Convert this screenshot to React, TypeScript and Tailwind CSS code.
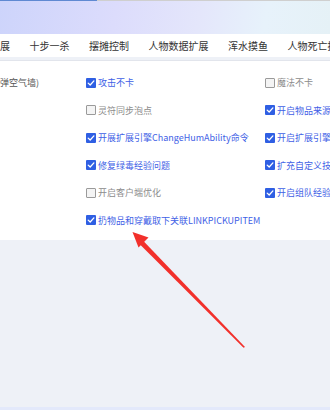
import React from "react";

interface Option {
  label: string;
  checked: boolean;
}

const tabs = ["十步一杀", "摆摊控制", "人物数据扩展", "浑水摸鱼", "人物死亡控制"];

const middle: Option[] = [
  { label: "攻击不卡", checked: true },
  { label: "灵符同步泡点", checked: false },
  { label: "开展扩展引擎ChangeHumAbility命令", checked: true },
  { label: "修复绿毒经验问题", checked: true },
  { label: "开启客户端优化", checked: false },
  { label: "扔物品和穿戴取下关联LINKPICKUPITEM", checked: true },
];

const right: (Option | null)[] = [
  { label: "魔法不卡", checked: false },
  { label: "开启物品来源记录", checked: true },
  { label: "开启扩展引擎功能", checked: true },
  { label: "扩充自定义技能", checked: true },
  { label: "开启组队经验分配", checked: true },
  null,
];

function CheckBox({ checked }: { checked: boolean }) {
  if (checked) {
    return (
      <span className="w-[10px] h-[10px] shrink-0 rounded-[1px] bg-[#2f5fe3] flex items-center justify-center">
        <svg width="8" height="8" viewBox="0 0 8 8" fill="none">
          <path d="M1.2 4.1 L3.2 6 L6.9 1.9" stroke="white" strokeWidth="1.3" strokeLinecap="round" strokeLinejoin="round" />
        </svg>
      </span>
    );
  }
  return <span className="w-[10px] h-[10px] shrink-0 rounded-[1px] border border-[#9a9a9a] bg-[#f4f4f4]" />;
}

function Item({ opt }: { opt: Option }) {
  return (
    <div className="flex items-center gap-[2px] whitespace-nowrap">
      <CheckBox checked={opt.checked} />
      <span className={opt.checked ? "text-[#3f5fe6]" : "text-[#8c8c8c]"}>{opt.label}</span>
    </div>
  );
}

export default function App() {
  return (
    <div
      className="relative w-[330px] h-[410px] overflow-hidden bg-[#eef1f7] flex flex-col"
      style={{ fontFamily: '"Noto Sans CJK SC", "Noto Sans", sans-serif' }}
    >
      <div className="flex h-[1px] shrink-0">
        <div className="w-[97px] bg-[#5f89d2]" />
        <div className="flex-1 bg-[#cfcfcf]" />
      </div>
      <div className="h-[33px] shrink-0 bg-[linear-gradient(100deg,#cdd4fb_0%,#dcdcfc_35%,#e4e6fb_60%,#e7f2fb_80%,#e5f1f6_100%)]" />
      <div className="h-[23px] shrink-0 bg-white flex items-center gap-[19.5px] text-[10px] text-[#333] whitespace-nowrap">
        <span className="-ml-[10px]">扩展</span>
        {tabs.map((t) => (
          <span key={t}>{t}</span>
        ))}
      </div>
      <div className="h-[3px] shrink-0 bg-[#eef1f7]" />
      <div className="h-[1px] shrink-0 bg-[#e2e5ec]" />
      <div className="bg-white pt-[8px] pb-[6px] text-[9px] grid grid-cols-[86px_179px_1fr] overflow-hidden">
        {middle.map((m, i) => (
          <React.Fragment key={m.label}>
            <div className="h-[27.5px] flex items-center overflow-hidden whitespace-nowrap text-[#555]">
              {i === 0 && <span className="-ml-[9px]">反弹空气墙)</span>}
            </div>
            <div className="h-[27.5px] flex items-center">
              <Item opt={m} />
            </div>
            <div className="h-[27.5px] flex items-center overflow-hidden">
              {right[i] && <Item opt={right[i] as Option} />}
            </div>
          </React.Fragment>
        ))}
      </div>
      <div className="flex-1" />
      <div className="h-[3px] shrink-0 bg-[#e3e9fb]" />
      <svg className="absolute left-0 top-0 pointer-events-none" width="330" height="410" viewBox="0 0 330 410">
        <polygon points="245,347 141,238.5 137.5,242 243.5,347.8" fill="#f2302b" />
        <polygon points="132.5,232 148.5,237.5 138.5,247.5" fill="#f2302b" />
      </svg>
    </div>
  );
}
